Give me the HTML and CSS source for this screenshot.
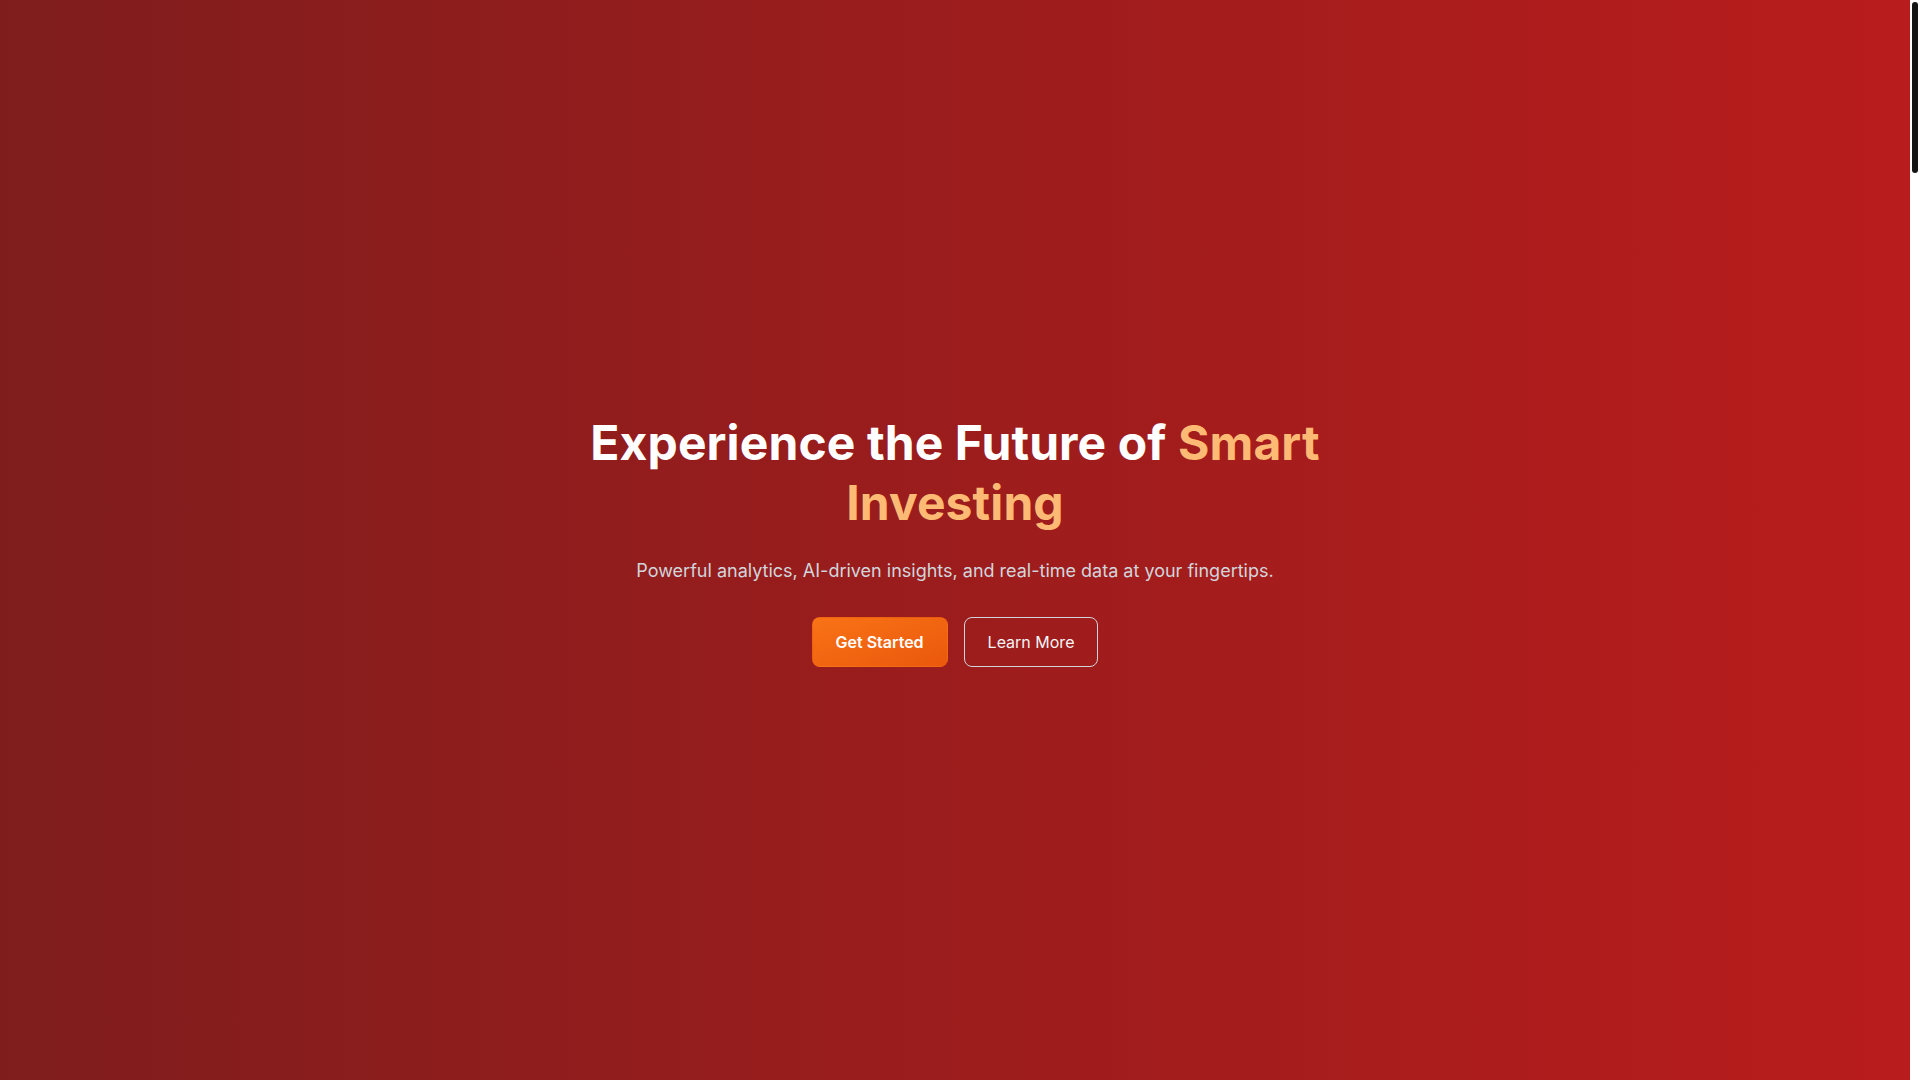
FILE: index.html
```html
<!DOCTYPE html>
<html lang="en">
<head>
<meta charset="utf-8">
<title>Smart Investing</title>
<link rel="stylesheet" href="styles.css">
</head>
<body>
<main class="page">
  <section class="hero">
    <div class="hero-inner">
      <h1 class="hero-title">Experience the Future of <span class="accent">Smart Investing</span></h1>
      <p class="hero-sub">Powerful analytics, AI-driven insights, and real-time data at your fingertips.</p>
      <div class="hero-actions">
        <a class="btn btn-primary" href="#">Get Started</a>
        <a class="btn btn-outline" href="#">Learn More</a>
      </div>
    </div>
  </section>
</main>
<div class="scrollbar" aria-hidden="true"><div class="scrollbar-thumb"></div></div>
</body>
</html>
```

FILE: styles.css
```css
* { box-sizing: border-box; }
html, body { margin: 0; padding: 0; }
html, body { background: #ffffff; overflow: hidden; }
body {
  font-family: Inter, "Noto Sans", sans-serif;
  color: #fff;
}
.page {
  margin-right: 10px;
}
.scrollbar {
  position: fixed;
  top: 0;
  right: 0;
  width: 10px;
  height: 100vh;
  background: #ffffff;
  padding: 2px 2px;
}
.scrollbar-thumb {
  width: 6px;
  height: 171px;
  border-radius: 3px;
  background: #141414;
}
.hero {
  min-height: 100vh;
  display: flex;
  align-items: center;
  justify-content: center;
  background: linear-gradient(to right, #7f1d1d, #b91c1c);
  padding: 0 16px;
}
.hero-inner {
  max-width: 768px;
  text-align: center;
  display: flex;
  flex-direction: column;
  align-items: center;
}
.hero-title {
  margin: 0 0 24px;
  font-size: 48px;
  line-height: 60px;
  font-weight: 700;
  color: #ffffff;
  letter-spacing: 0.1px;
}
.accent { color: #fdba74; }
.hero-sub {
  margin: 0 0 32px;
  font-size: 18px;
  line-height: 28px;
  color: #d1d5db;
}
.hero-actions {
  display: flex;
  gap: 16px;
  justify-content: center;
}
.btn {
  display: inline-block;
  padding: 12px 23px;
  font-size: 16px;
  line-height: 24px;
  border-radius: 8px;
  text-decoration: none;
  color: #fff;
}
.btn-primary {
  background: linear-gradient(to bottom right, #f97316, #ea580c);
  font-weight: 600;
  border: 1px solid transparent;
}
.btn-outline {
  border: 1px solid #d1d5db;
  color: #f3f4f6;
  font-weight: 400;
}
```
